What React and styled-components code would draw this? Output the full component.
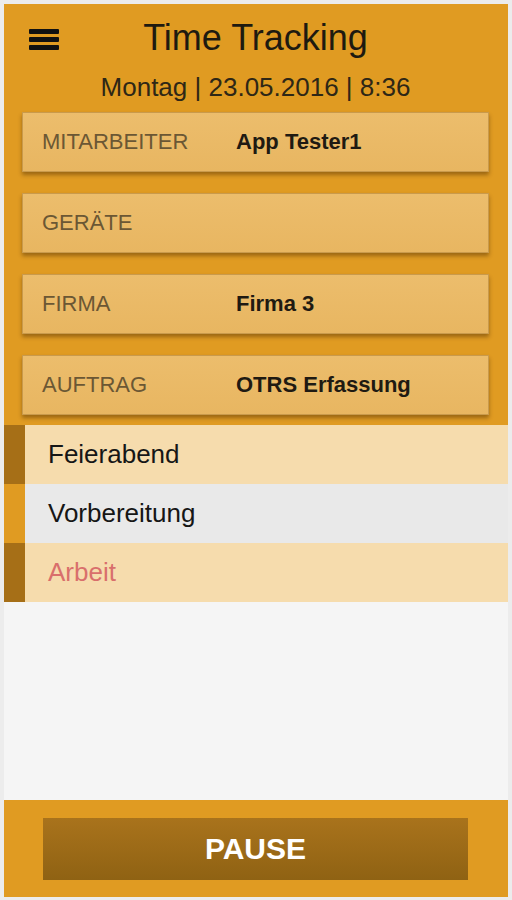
import React from 'react'
import styled, { createGlobalStyle } from 'styled-components'

const GlobalStyle = createGlobalStyle`
  body {
    margin: 0;
    background: #ececec;
    font-family: Arial, "Liberation Sans", Helvetica, sans-serif;
  }
`

const fields = [
  { label: 'Mitarbeiter', value: 'App Tester1' },
  { label: 'Geräte', value: '' },
  { label: 'Firma', value: 'Firma 3' },
  { label: 'Auftrag', value: 'OTRS Erfassung' },
]

const states = [
  { name: 'Feierabend', tone: 'light', bar: 'dark' },
  { name: 'Vorbereitung', tone: 'gray', bar: 'orange' },
  { name: 'Arbeit', tone: 'light', bar: 'dark', active: true },
]

const App = () => {
  return (
    <>
      <GlobalStyle />
      <Frame>
        <Screen>
          <Header>
            <TitleRow>
              <Burger aria-label="menu">
                <span />
                <span />
                <span />
              </Burger>
              <Title>Time Tracking</Title>
            </TitleRow>
            <DateLine>Montag | 23.05.2016 | 8:36</DateLine>
            <Cards>
              {fields.map((f) => (
                <Card key={f.label}>
                  <Label>{f.label}</Label>
                  <Value>{f.value}</Value>
                </Card>
              ))}
            </Cards>
          </Header>

          <StateList>
            {states.map((s) => (
              <StateRow key={s.name} tone={s.tone}>
                <Bar bar={s.bar} />
                <StateName active={s.active}>{s.name}</StateName>
              </StateRow>
            ))}
          </StateList>

          <Empty />

          <Footer>
            <PauseButton>PAUSE</PauseButton>
          </Footer>
        </Screen>
      </Frame>
    </>
  )
}

const Frame = styled.div`
  padding: 4px 4px 3px 4px;
  height: 900px;
  box-sizing: border-box;
`

const Screen = styled.div`
  height: 893px;
  display: flex;
  flex-direction: column;
  background: #f5f5f5;
`

const Header = styled.header`
  background: #e09b22;
  padding: 0 19px 10px 18px;
`

const TitleRow = styled.div`
  position: relative;
  height: 68px;
  display: flex;
  align-items: center;
  justify-content: center;
`

const Burger = styled.div`
  position: absolute;
  left: 7px;
  top: 25px;
  width: 30px;
  display: flex;
  flex-direction: column;
  gap: 3px;

  span {
    display: block;
    height: 5px;
    background: #111;
    border-radius: 1px;
  }
`

const Title = styled.h1`
  margin: 0;
  font-family: Arial, "Liberation Sans", sans-serif;
  font-size: 36px;
  font-weight: normal;
  color: #1e1a10;
  transform: translateY(0);
`

const DateLine = styled.div`
  text-align: center;
  font-size: 26px;
  color: #2e2716;
  height: 40px;
  line-height: 30px;
`

const Cards = styled.div`
  display: flex;
  flex-direction: column;
  gap: 21px;
`

const Card = styled.div`
  height: 60px;
  box-sizing: border-box;
  display: flex;
  align-items: center;
  padding-left: 19px;
  background: linear-gradient(#ecbd6c, #e8b661);
  border: 1px solid #c99a4c;
  box-shadow: 0 3px 4px rgba(70, 40, 0, 0.45);
`

const Label = styled.span`
  width: 194px;
  font-size: 22px;
  text-transform: uppercase;
  color: #6b5734;
`

const Value = styled.span`
  font-size: 22px;
  font-weight: bold;
  color: #1f1a12;
`

const StateList = styled.div`
  display: flex;
  flex-direction: column;
`

const toneColors = {
  light: '#f6dcad',
  gray: '#e9e9e9',
}

const barColors = {
  dark: '#a66f17',
  orange: '#e09b22',
}

const StateRow = styled.div`
  height: 59px;
  display: flex;
  align-items: center;
  background: ${(p) => toneColors[p.tone]};
`

const Bar = styled.div`
  width: 21px;
  align-self: stretch;
  background: ${(p) => barColors[p.bar]};
`

const StateName = styled.span`
  padding-left: 23px;
  font-size: 26px;
  color: ${(p) => (p.active ? '#d96f6c' : '#161616')};
`

const Empty = styled.div`
  flex: 1;
  background: #f5f5f5;
`

const Footer = styled.footer`
  height: 97px;
  background: #e09b22;
  padding: 18px 40px 0 39px;
  box-sizing: border-box;
`

const PauseButton = styled.button`
  width: 100%;
  height: 62px;
  border: none;
  background: linear-gradient(#a9731c, #8f6213);
  color: #fff;
  font-family: Arial, "Liberation Sans", sans-serif;
  font-size: 30px;
  font-weight: bold;
  cursor: pointer;
`

export default App
